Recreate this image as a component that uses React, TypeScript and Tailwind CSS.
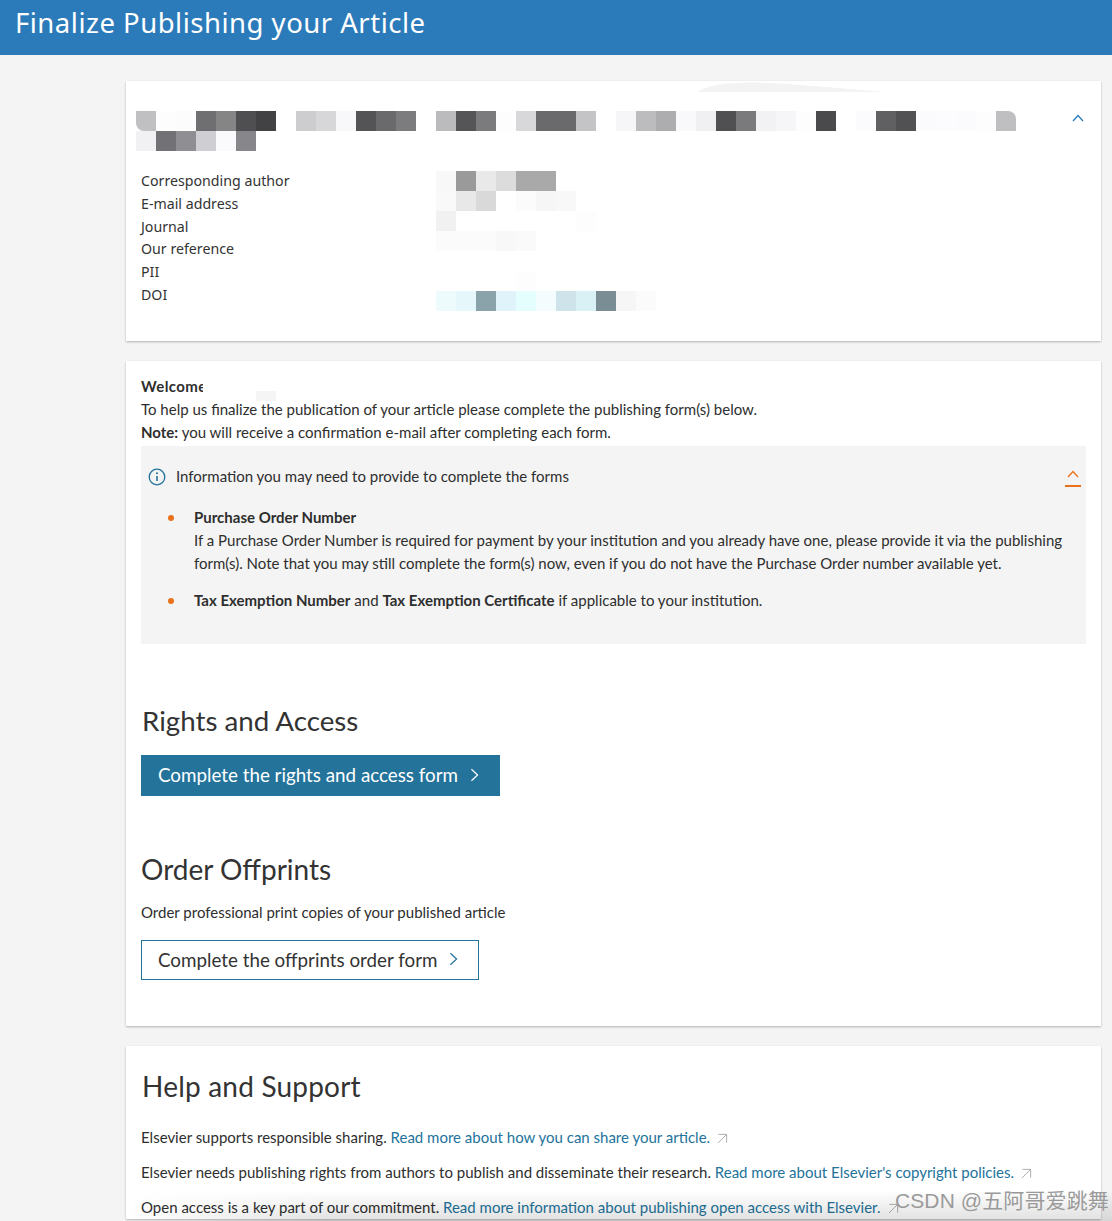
import React from "react";

const F = { fontFamily: 'Lato, "Noto Sans", sans-serif' };
const R = { fontFamily: '"Noto Sans", sans-serif' };

const titleRow1: (string | null)[] = ["#c0c0c2","#fdfdfe","#fcfcfd","#6f6f71","#858586","#4f4f51","#424244",null,"#cdcdcf","#d7d7d9","#f8f8fa","#545456","#6a6a6c","#7c7c7e",null,"#bbbbbd","#555557","#7b7b7d","#fdfdfe","#d8d8da","#6a6a6c","#6a6a6c","#c4c4c6",null,"#f6f6f8","#bcbcbe","#adadaf","#f9f9fb","#f0f0f2","#505052","#7a7a7c","#f2f2f4","#f6f6f8","#fdfdfe","#4a4a4c",null,"#fbfbfd","#606062","#515153","#fbfbfd","#fcfcfe","#fbfbfd","#fdfdfe","#bfbfc1"];
const titleRow2: (string | null)[] = ["#f1f1f3","#727276","#8f8f93","#cfcfd3","#fafafc","#87878b"];
const valueRows: (string | null)[][] = [
  ["#f8f8f8","#9a9a9a","#e9e9e9","#dcdcdc","#a9a9a9","#a9a9a9"],
  ["#f9f9f9","#e8e8e8","#d9d9d9",null,"#fbfbfb","#f6f6f6","#f8f8f8"],
  ["#f1f1f1",null,null,null,null,null,null,"#fdfdfd"],
  ["#fbfbfb","#fbfbfb","#fbfbfb","#f8f8f8","#fafafa"],
  [],
  [null,null,null,null,"#fdfdfd"],
  ["#eefbfd","#e6f7fb","#8aa3aa","#e0f3fb","#e4fdfd","#f5fcfe","#cee3ea","#d9f1f4","#7a8d94","#f6f6f6","#fbfbfb"],
];

function Mosaic({ cells, className = "" }: { cells: (string | null)[]; className?: string }) {
  return (
    <div className={"flex h-5 w-fit overflow-hidden " + className}>
      {cells.map((c, i) => (
        <div key={i} className="w-5 h-5 shrink-0" style={{ backgroundColor: c ?? "transparent" }} />
      ))}
    </div>
  );
}

function ArrowOut() {
  return (
    <svg viewBox="0 0 12 12" className="inline-block w-[11px] h-[11px] ml-[7px] align-[-1px] text-[#a8a8a8]" fill="none" stroke="currentColor" strokeWidth="1">
      <path d="M1.5 1.5H10.5V10.5M10.5 1.5L1 11" />
    </svg>
  );
}

function Chevron({ className }: { className: string }) {
  return (
    <svg viewBox="0 0 10 16" className={className} fill="none" stroke="currentColor" strokeWidth="1.4">
      <path d="M1.5 1.5L8.5 8L1.5 14.5" />
    </svg>
  );
}

export default function App() {
  return (
    <div className="relative h-[1221px] overflow-hidden bg-[#f4f4f4] text-[#2e2e2e]" style={F}>
      <header className="h-[55px] bg-[#2b7bba] pl-[15px] text-[27.5px] leading-[46px] tracking-[0.5px] text-white" style={R}>
        Finalize Publishing your Article
      </header>

      <main className="ml-[126px] mr-[11px] flex flex-col gap-5 pt-[26px]">
        <section className="relative h-[260px] bg-white shadow-[0_1px_2px_rgba(0,0,0,0.28)] pt-[30px]">
          <svg viewBox="0 0 190 10" className="absolute left-[571px] top-[1px] h-[10px] w-[190px] text-[#f3f3f3]" fill="currentColor">
            <path d="M0 10C8 5 20 2 40 1C70 -1 120 5 190 10Z" />
          </svg>
          <div className="relative pl-[10px]">
            <Mosaic cells={titleRow1} className="rounded-bl-[8px] rounded-tr-[8px]" />
            <Mosaic cells={titleRow2} />
            <svg viewBox="0 0 12 8" className="absolute right-[17px] top-[3px] w-[12px] h-[8px] text-[#2b7bba]" fill="none" stroke="currentColor" strokeWidth="1.3">
              <path d="M1 7L6 1.5L11 7" />
            </svg>
          </div>
          <div className="flex pt-[20px]">
            <div className="-mt-[1px] w-[310px] pl-[15px] text-[14.2px] leading-[22.8px] text-[#333]" style={R}>
              <div>Corresponding author</div>
              <div>E-mail address</div>
              <div>Journal</div>
              <div>Our reference</div>
              <div>PII</div>
              <div>DOI</div>
            </div>
            <div>
              {valueRows.map((r, i) => (
                <Mosaic key={i} cells={r} />
              ))}
            </div>
          </div>
        </section>

        <section className="h-[665px] bg-white shadow-[0_1px_2px_rgba(0,0,0,0.28)] px-[15px] pt-[14px] text-[15px] leading-[23px]">
          <div className="flex h-[23px]">
            <div className="relative w-[62px] font-bold whitespace-nowrap tracking-[0.4px]">
              Welcome
              <span className="absolute left-[62px] top-0 h-[23px] w-[6px] bg-white" />
            </div>
            <div className="ml-[53px] mt-[16px] h-[10px] w-5 bg-[#f5f5f5]" />
          </div>
          <p>To help us finalize the publication of your article please complete the publishing form(s) below.</p>
          <p><strong className="font-bold">Note:</strong> you will receive a confirmation e-mail after completing each form.</p>

          <div className="mt-[2px] h-[198px] bg-[#f4f4f4] pt-[19px]">
            <div className="flex items-center pl-[7px] pr-[5px]">
              <svg viewBox="0 0 18 18" className="h-[18px] w-[18px] text-[#23739b]" fill="none" stroke="currentColor" strokeWidth="1.3">
                <circle cx="9" cy="9" r="7.8" />
                <path d="M9 8V13" strokeWidth="1.6" />
                <circle cx="9" cy="5.3" r="1" fill="currentColor" stroke="none" />
              </svg>
              <span className="ml-[10px] flex-1">Information you may need to provide to complete the forms</span>
              <div className="flex w-4 flex-col items-center gap-[7px] pt-[3px]">
                <svg viewBox="0 0 12 8" className="h-[8px] w-[12px] text-[#e9711c]" fill="none" stroke="currentColor" strokeWidth="1.3">
                  <path d="M1 7L6 1.5L11 7" />
                </svg>
                <div className="h-[2px] w-4 bg-[#e9711c]" />
              </div>
            </div>
            <ul className="mt-[18px] flex flex-col gap-[14px] pl-[27px] pr-[15px]">
              <li className="flex">
                <span className="mt-[9px] h-[6px] w-[6px] shrink-0 rounded-full bg-[#e9711c]" />
                <div className="ml-[20px]">
                  <div className="font-bold">Purchase Order Number</div>
                  <div>If a Purchase Order Number is required for payment by your institution and you already have one, please provide it via the publishing form(s). Note that you may still complete the form(s) now, even if you do not have the Purchase Order number available yet.</div>
                </div>
              </li>
              <li className="flex">
                <span className="mt-[9px] h-[6px] w-[6px] shrink-0 rounded-full bg-[#e9711c]" />
                <div className="ml-[20px]">
                  <strong className="font-bold">Tax Exemption Number</strong> and <strong className="font-bold">Tax Exemption Certificate</strong> if applicable to your institution.
                </div>
              </li>
            </ul>
          </div>

          <h2 className="mt-[57px] pl-[1px] text-[27.7px] leading-[40px] text-[#333]">Rights and Access</h2>
          <button className="mt-[14px] flex h-[41px] w-[359px] items-center whitespace-nowrap bg-[#23739b] pb-[2px] pl-[17px] text-[18.8px] text-white">
            Complete the rights and access form
            <Chevron className="ml-[12px] h-[14px] w-[9px] shrink-0" />
          </button>

          <h2 className="mt-[53px] text-[28px] leading-[40px] text-[#333]">Order Offprints</h2>
          <p className="mt-[12px]">Order professional print copies of your published article</p>
          <button className="mt-[16px] flex h-[40px] w-[338px] items-center whitespace-nowrap border border-[#23739b] pb-[2px] pl-[16px] text-[18.8px] text-[#333]">
            Complete the offprints order form
            <Chevron className="ml-[12px] h-[14px] w-[9px] shrink-0 text-[#23739b]" />
          </button>
        </section>

        <section className="flex-1 bg-white shadow-[0_1px_2px_rgba(0,0,0,0.28)] px-[15px] pt-[20px] text-[15px] leading-[23px]">
          <h2 className="pl-[1px] text-[28px] leading-[40px] tracking-[0.2px] text-[#333]">Help and Support</h2>
          <p className="mt-[20px]">Elsevier supports responsible sharing. <a className="text-[#23739b]">Read more about how you can share your article.</a><ArrowOut /></p>
          <p className="mt-[12px]">Elsevier needs publishing rights from authors to publish and disseminate their research. <a className="text-[#23739b]">Read more about Elsevier's copyright policies.</a><ArrowOut /></p>
          <p className="mt-[12px] whitespace-nowrap">Open access is a key part of our commitment. <a className="text-[#23739b]">Read more information about publishing open access with Elsevier.</a><ArrowOut /></p>
        </section>
      </main>

      <div className="absolute bottom-0 left-[126px] right-0 h-[30px] bg-gradient-to-b from-transparent to-[#0000001f] [mask-image:linear-gradient(to_right,transparent,black_200px)]" />
      <div className="absolute left-[895px] top-[1187px] whitespace-nowrap text-[21px] leading-[28px] tracking-[0.1px] text-[#9a9a9a]" style={{ fontFamily: '"Liberation Sans", "Noto Sans CJK SC", sans-serif' }}>
        CSDN @五阿哥爱跳舞
      </div>
    </div>
  );
}
